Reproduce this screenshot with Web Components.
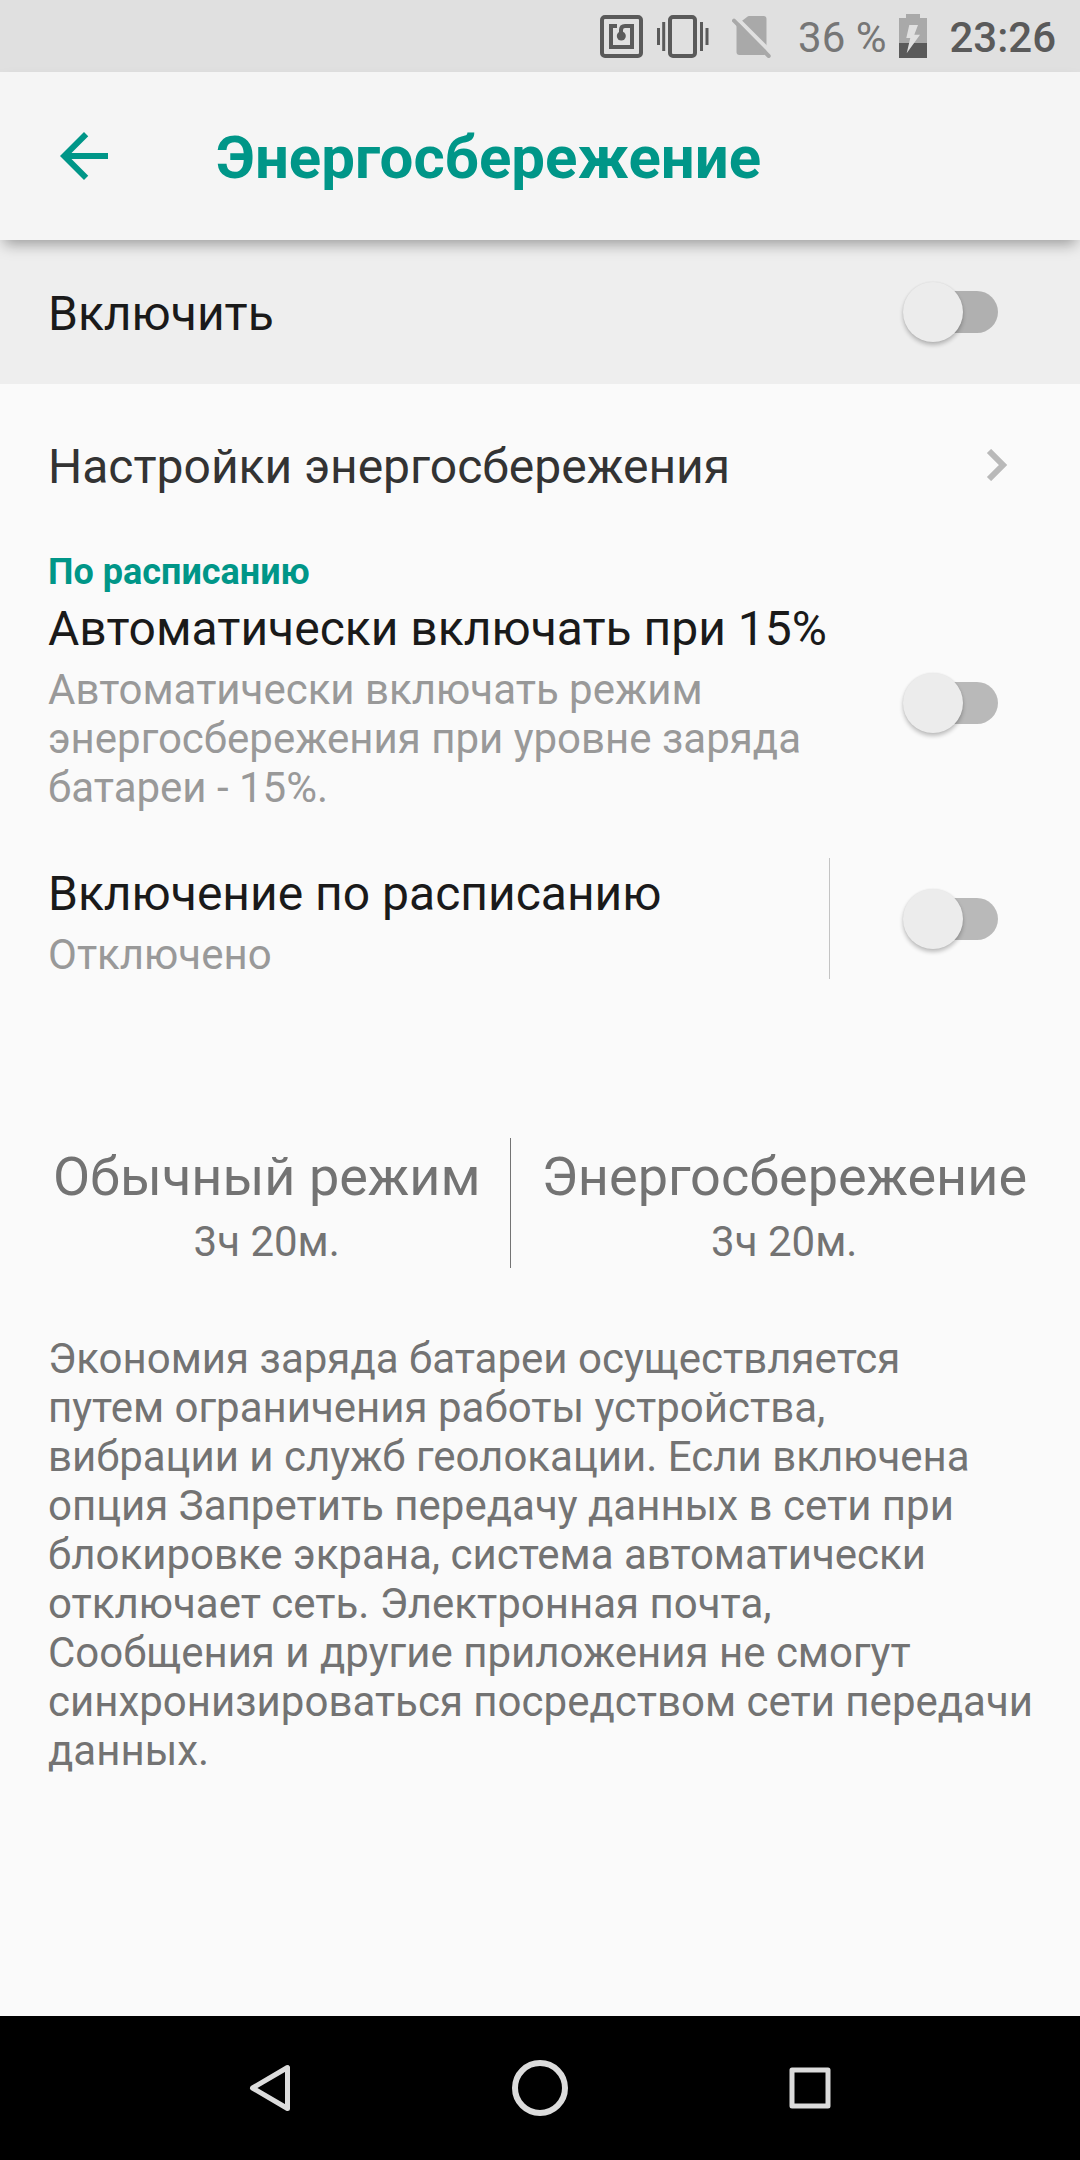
<!DOCTYPE html>
<html lang="ru">
<head>
<meta charset="utf-8">
<meta name="viewport" content="width=device-width, initial-scale=1">
<title>Энергосбережение</title>
<style>
  :root {
    --accent: #009688;
    --text: #1a1a1a;
    --text-secondary: #999;
    --text-muted: #737373;
    --status: #e0e0e0;
    --side: 48px;
  }

  body {
    margin: 0;
    min-height: 100vh;
    display: flex;
    flex-direction: column;
    background: #fafafa;
    color: var(--text);
    font-family: Roboto, sans-serif;
    font-size: 42px;
    line-height: 49px;
  }

  main {
    flex: 1;
  }
</style>
</head>
<body>
  <x-status-bar battery="36 %" time="23:26"></x-status-bar>
  <x-app-bar>Энергосбережение</x-app-bar>

  <main>
    <x-switch-row bar>Включить</x-switch-row>
    <x-link-row>Настройки энергосбережения</x-link-row>
    <x-section>
      <span slot="title">По расписанию</span>
      <x-switch-row>
        Автоматически включать при 15%
        <span slot="summary">Автоматически включать режим энергосбережения при уровне заряда батареи - 15%.</span>
      </x-switch-row>
      <x-switch-row divided>
        Включение по расписанию
        <span slot="summary">Отключено</span>
      </x-switch-row>
    </x-section>
    <x-modes>
      <x-mode time="3ч 20м.">Обычный режим</x-mode>
      <x-mode time="3ч 20м.">Энергосбережение</x-mode>
    </x-modes>
    <x-note>
      Экономия заряда батареи осуществляется<br>
      путем ограничения работы устройства,<br>
      вибрации и служб геолокации. Если включена<br>
      опция Запретить передачу данных в сети при<br>
      блокировке экрана, система автоматически<br>
      отключает сеть. Электронная почта,<br>
      Сообщения и другие приложения не смогут<br>
      синхронизироваться посредством сети передачи<br>
      данных.
    </x-note>
  </main>

  <x-nav-bar></x-nav-bar>

<script>
class StatusBar extends HTMLElement {
  connectedCallback() {
    this.shadow = this.attachShadow({ mode: "open" });

    this.shadow.innerHTML = `
      <style>
        :host {
          display: flex;
          align-items: center;
          justify-content: flex-end;
          height: 72px;
          padding: 0 24px;
          background: var(--status);
          color: #5a5a5a;
        }

        svg {
          flex: none;
          display: block;
          height: 44px;
          fill: none;
          stroke: currentColor;
        }

        .nfc { width: 44px; margin-right: 13px; }
        .vibrate { width: 52px; margin-right: 23px; }
        .sim { width: 39px; margin-right: 27px; color: #a9a9a9; }
        .charge { width: 28px; margin-right: 22px; }

        .battery,
        .time {
          padding-top: 3px;
        }

        .battery {
          color: #767676;
          margin-right: 13px;
        }

        .time {
          font-weight: 500;
        }
      </style>
      <svg class="nfc" viewBox="0 0 44 44" stroke-width="4">
        <rect x="2" y="3" width="39" height="39" rx="3"/>
        <path d="M17 12H11V33H32V12H25q-4 0-4 4V22"/>
        <circle cx="21.3" cy="22" r="4.5" fill="currentColor" stroke="none"/>
      </svg>
      <svg class="vibrate" viewBox="0 0 52 44" stroke-width="4">
        <rect x="13" y="3" width="25" height="39" rx="3"/>
        <path d="M1.5 14v17M6.7 8v29M44.5 8v29M50 14v17" stroke-width="3"/>
      </svg>
      <svg class="sim" viewBox="0 0 39 44">
        <path d="M17 2H31.5q3 0 3 3V38q0 3-3 3H7.5q-3 0-3-3V11L15 3q1-1 2-1z" fill="currentColor" stroke="none"/>
        <path d="M2 1.300L40 39.300" stroke="var(--status)" stroke-width="4"/>
        <path d="M2 6.700L36.700 42" stroke-width="4" stroke-linecap="round"/>
      </svg>
      <span class="battery"></span>
      <svg class="charge" viewBox="0 0 28 44">
        <path d="M7 0H21V4H28V29H0V4H7z" fill="#a9a9a9" stroke="none"/>
        <path d="M0 29H28V44H0z" fill="currentColor" stroke="none"/>
        <path d="M10.3 11H19L15.3 20.7H21L7.7 39.3L11.3 24H7.3z" fill="var(--status)" stroke="none"/>
      </svg>
      <span class="time"></span>
    `;
    this.shadow.querySelector('.battery').innerText = this.getAttribute('battery');
    this.shadow.querySelector('.time').innerText = this.getAttribute('time');
  }
}

class AppBar extends HTMLElement {
  connectedCallback() {
    this.shadow = this.attachShadow({ mode: "open" });

    this.shadow.innerHTML = `
      <style>
        :host {
          position: relative;
          z-index: 1;
          display: flex;
          align-items: center;
          gap: 96px;
          height: 168px;
          padding: 0 var(--side);
          background: #f5f5f5;
          color: var(--accent);
          box-shadow: 0 8px 14px -4px rgba(0, 0, 0, .36);
        }

        button {
          width: 72px;
          height: 72px;
          padding: 0;
          border: 0;
          background: none;
          color: inherit;
        }

        svg {
          display: block;
        }

        h1 {
          margin: 0;
          padding-top: 4px;
          font-size: 60px;
          line-height: 72px;
          font-weight: 700;
        }
      </style>
      <button type="button" aria-label="Назад">
        <svg width="72" height="72" viewBox="0 0 24 24" fill="currentColor">
          <path d="M20 11H7.83l5.59-5.59L12 4l-8 8 8 8 1.41-1.41L7.83 13H20v-2z"/>
        </svg>
      </button>
      <h1><slot></slot></h1>
    `;
  }
}

class SwitchRow extends HTMLElement {
  connectedCallback() {
    this.shadow = this.attachShadow({ mode: "open" });

    this.shadow.innerHTML = `
      <style>
        :host {
          display: block;
          padding: 0 var(--side);
        }

        :host([bar]) {
          background: #eee;
        }

        label {
          display: flex;
          align-items: center;
        }

        :host([bar]) label {
          height: 144px;
        }

        .text {
          flex: 1;
          display: flex;
          flex-direction: column;
          gap: 8px;
          padding-top: 8px;
        }

        :host([bar]) .text {
          padding-top: 3px;
        }

        .title {
          font-size: 48px;
          line-height: 56px;
        }

        .summary {
          color: var(--text-secondary);
        }

        :host([bar]) .summary {
          display: none;
        }

        .widget {
          box-sizing: border-box;
          align-self: stretch;
          display: flex;
          align-items: center;
          justify-content: flex-end;
          width: 203px;
          padding-right: 34px;
          border-left: 1px solid transparent;
        }

        :host([divided]) .widget {
          border-color: #c4c4c4;
        }

        input {
          appearance: none;
          display: grid;
          align-items: center;
          width: 95px;
          height: 60px;
          margin: 0;
        }

        input::before,
        input::after {
          content: "";
          grid-area: 1 / 1;
        }

        input::before {
          justify-self: end;
          width: 84px;
          height: 42px;
          border-radius: 21px;
          background: rgba(0, 0, 0, .26);
        }

        input::after {
          width: 60px;
          height: 60px;
          border-radius: 50%;
          background: #ececec;
          box-shadow: 0 3px 4px rgba(0, 0, 0, .24), 0 0 2px rgba(0, 0, 0, .08);
        }

        input:checked::before {
          background: var(--accent);
          opacity: .5;
        }

        input:checked::after {
          justify-self: end;
          background: var(--accent);
        }
      </style>
      <label>
        <span class="text">
          <span class="title"><slot></slot></span>
          <span class="summary"><slot name="summary"></slot></span>
        </span>
        <span class="widget"><input type="checkbox" role="switch"></span>
      </label>
    `;
  }
}

class LinkRow extends HTMLElement {
  connectedCallback() {
    this.shadow = this.attachShadow({ mode: "open" });

    this.shadow.innerHTML = `
      <style>
        :host {
          display: block;
        }

        a {
          display: flex;
          align-items: center;
          justify-content: space-between;
          padding: 55px 72px 56px var(--side);
          color: #333;
          font-size: 48px;
          line-height: 56px;
          text-decoration: none;
        }

        svg {
          margin-bottom: 4px;
        }
      </style>
      <a href="#">
        <slot></slot>
        <svg width="22" height="32" viewBox="0 0 22 32" fill="none" stroke="#b9b9b9" stroke-width="6">
          <path d="M3 2L17 16L3 30"/>
        </svg>
      </a>
    `;
  }
}

class Section extends HTMLElement {
  connectedCallback() {
    this.shadow = this.attachShadow({ mode: "open" });

    this.shadow.innerHTML = `
      <style>
        :host {
          display: block;
        }

        h2 {
          margin: 0;
          padding: 0 var(--side);
          color: var(--accent);
          font-size: 36px;
          line-height: 42px;
          font-weight: 700;
        }

        .rows {
          display: flex;
          flex-direction: column;
          gap: 46px;
        }
      </style>
      <h2><slot name="title"></slot></h2>
      <div class="rows"><slot></slot></div>
    `;
  }
}

class Modes extends HTMLElement {
  connectedCallback() {
    this.shadow = this.attachShadow({ mode: "open" });

    this.shadow.innerHTML = `
      <style>
        :host {
          display: flex;
          justify-content: center;
          margin-top: 159px;
          color: var(--text-muted);
        }

        ::slotted(:not(:first-child)) {
          border-left: 1px solid var(--text-muted);
        }
      </style>
      <slot></slot>
    `;
  }
}

class Mode extends HTMLElement {
  connectedCallback() {
    this.shadow = this.attachShadow({ mode: "open" });

    this.shadow.innerHTML = `
      <style>
        :host {
          display: flex;
          flex-direction: column;
          gap: 8px;
          padding: 7px 30px 2px;
          text-align: center;
        }

        .name {
          font-size: 54px;
          line-height: 64px;
        }
      </style>
      <span class="name"><slot></slot></span>
      <span class="time"></span>
    `;
    this.shadow.querySelector('.time').innerText = this.getAttribute('time');
  }
}

class Note extends HTMLElement {
  connectedCallback() {
    this.shadow = this.attachShadow({ mode: "open" });

    this.shadow.innerHTML = `
      <style>
        :host {
          display: block;
          padding: 66px 24px 66px var(--side);
          color: var(--text-muted);
        }

        p {
          margin: 0;
        }
      </style>
      <p><slot></slot></p>
    `;
  }
}

class NavBar extends HTMLElement {
  connectedCallback() {
    this.shadow = this.attachShadow({ mode: "open" });

    this.shadow.innerHTML = `
      <style>
        :host {
          display: grid;
          grid-template-columns: repeat(3, 1fr);
          height: 144px;
          padding: 0 12.5%;
          background: #000;
        }

        button {
          display: flex;
          align-items: center;
          justify-content: center;
          padding: 0;
          border: 0;
          background: none;
          color: #dcdcdc;
        }

        svg {
          fill: none;
          stroke: currentColor;
          stroke-linejoin: round;
        }
      </style>
      <button type="button" aria-label="Назад">
        <svg width="60" height="60" viewBox="0 0 60 60" stroke-width="5">
          <path d="M12.5 30L47.5 9.5V50.5z"/>
        </svg>
      </button>
      <button type="button" aria-label="Домой">
        <svg width="60" height="60" viewBox="0 0 60 60" stroke-width="6">
          <circle cx="30" cy="30" r="25"/>
        </svg>
      </button>
      <button type="button" aria-label="Недавние">
        <svg width="60" height="60" viewBox="0 0 60 60" stroke-width="5">
          <rect x="12" y="12" width="36" height="36"/>
        </svg>
      </button>
    `;
  }
}

customElements.define('x-status-bar', StatusBar);
customElements.define('x-app-bar', AppBar);
customElements.define('x-switch-row', SwitchRow);
customElements.define('x-link-row', LinkRow);
customElements.define('x-section', Section);
customElements.define('x-modes', Modes);
customElements.define('x-mode', Mode);
customElements.define('x-note', Note);
customElements.define('x-nav-bar', NavBar);
</script>
</body>
</html>
